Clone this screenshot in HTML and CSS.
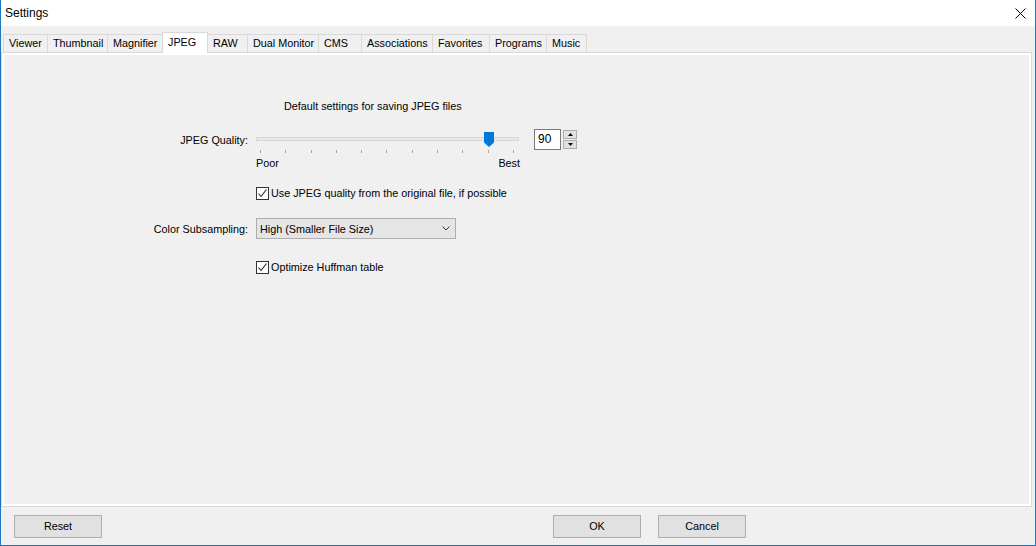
FILE: index.html
```html
<!DOCTYPE html>
<html>
<head>
<meta charset="utf-8">
<link rel="stylesheet" href="styles.css">
</head>
<body>
<div class="window">
  <div class="titlebar">
    <span class="title">Settings</span>
    <svg class="close" width="11" height="11" viewBox="0 0 11 11"><path d="M0.5 0.5L10.5 10.5M10.5 0.5L0.5 10.5" stroke="#000" stroke-width="1"/></svg>
  </div>
  <div class="tabs">
    <div class="tab t-viewer">Viewer</div>
    <div class="tab t-thumb">Thumbnail</div>
    <div class="tab t-mag">Magnifier</div>
    <div class="tab active t-jpeg">JPEG</div>
    <div class="tab t-raw">RAW</div>
    <div class="tab t-dual">Dual Monitor</div>
    <div class="tab t-cms">CMS</div>
    <div class="tab t-assoc">Associations</div>
    <div class="tab t-fav">Favorites</div>
    <div class="tab t-prog">Programs</div>
    <div class="tab last t-music">Music</div>
  </div>
  <div class="panel">
    <div class="heading">Default settings for saving JPEG files</div>
    <div class="row quality-row">
      <div class="lbl">JPEG Quality:</div>
      <div class="slider">
        <div class="track"></div>
        <svg class="thumb" width="10" height="15" viewBox="0 0 10 15"><path d="M0 0H10V10.5L5 15L0 10.5Z" fill="#0078d7"/></svg>
      </div>
      <div class="spin-box">90</div>
      <div class="spin-btns">
        <div class="spin-btn"><svg width="7" height="4" viewBox="0 0 7 4"><path d="M0 4L3.5 0L7 4Z" fill="#000"/></svg></div>
        <div class="spin-btn"><svg width="7" height="4" viewBox="0 0 7 4"><path d="M0 0L3.5 4L7 0Z" fill="#000"/></svg></div>
      </div>
    </div>
    <div class="ticks">
      <span class="tick"></span><span class="tick"></span><span class="tick"></span><span class="tick"></span><span class="tick"></span><span class="tick"></span><span class="tick"></span><span class="tick"></span><span class="tick"></span><span class="tick"></span><span class="tick"></span>
    </div>
    <div class="scale-labels"><span>Poor</span><span>Best</span></div>
    <div class="check-row first-check">
      <span class="checkbox"><svg width="11" height="11" viewBox="0 0 11 11"><path d="M1.5 5.5L4 8.5L9.5 1.5" fill="none" stroke="#222" stroke-width="1.1"/></svg></span>
      <span class="check-text">Use JPEG quality from the original file, if possible</span>
    </div>
    <div class="row combo-row">
      <div class="lbl">Color Subsampling:</div>
      <div class="combo">
        <span>High (Smaller File Size)</span>
        <svg class="chev" width="8" height="5" viewBox="0 0 8 5"><path d="M0.5 0.5L4 4L7.5 0.5" fill="none" stroke="#333" stroke-width="1"/></svg>
      </div>
    </div>
    <div class="check-row second-check">
      <span class="checkbox"><svg width="11" height="11" viewBox="0 0 11 11"><path d="M1.5 5.5L4 8.5L9.5 1.5" fill="none" stroke="#222" stroke-width="1.1"/></svg></span>
      <span class="check-text">Optimize Huffman table</span>
    </div>
  </div>
  <div class="footer">
    <div class="btn reset">Reset</div>
    <div class="btn ok">OK</div>
    <div class="btn cancel">Cancel</div>
  </div>
</div>
</body>
</html>
```

FILE: styles.css
```css
body {
  margin: 0;
  font-family: "Liberation Sans", Arial, sans-serif;
  font-size: 10.8px;
  color: #000;
}

.window {
  box-sizing: border-box;
  width: 1036px;
  height: 546px;
  border: 1px solid #1f77c4;
  border-top: none;
  background: #f0f0f0;
  display: flex;
  flex-direction: column;
}

.titlebar {
  height: 26px;
  flex: none;
  background: #fff;
  display: flex;
  align-items: center;
  justify-content: space-between;
  padding-left: 4px;
  font-size: 12px;
}

.close {
  margin-right: 9px;
}

.tabs {
  height: 26px;
  flex: none;
  display: flex;
  align-items: flex-end;
  padding-left: 2px;
}

.tab {
  box-sizing: border-box;
  height: 18px;
  border: 1px solid #d9d9d9;
  border-bottom: none;
  border-right: none;
  padding-left: 5px;
  line-height: 17px;
  white-space: nowrap;
  background: #f0f0f0;
}

.tab.active {
  height: 21px;
  margin-bottom: -1px;
  background: #fff;
  border-right: 1px solid #d9d9d9;
  position: relative;
  z-index: 2;
  line-height: 18px;
}

.tab.active + .tab {
  border-left: none;
}

.tab.last {
  border-right: 1px solid #d9d9d9;
}

.t-viewer { width: 44px; }
.t-thumb { width: 60px; }
.t-mag { width: 55px; }
.t-jpeg { width: 46px; }
.t-raw { width: 39px; }
.t-dual { width: 71px; }
.t-cms { width: 43px; }
.t-assoc { width: 71px; }
.t-fav { width: 57px; }
.t-prog { width: 57px; }
.t-music { width: 41px; }

.panel {
  flex: 1;
  margin-right: 3px;
  border: 1px solid #d9d9d9;
  box-shadow: inset 0 0 0 2px #fff;
  background: #f0f0f0;
}

.heading {
  margin-top: 46px;
  margin-left: 282px;
  line-height: 15px;
}

.row {
  display: flex;
  align-items: center;
}

.lbl {
  width: 246px;
  margin-right: 8px;
  text-align: right;
  white-space: nowrap;
}

.quality-row {
  margin-top: 15px;
  height: 21px;
}

.slider {
  position: relative;
  width: 263px;
  height: 21px;
}

.track {
  box-sizing: border-box;
  margin-top: 8px;
  height: 4px;
  border: 1px solid #d6d6d6;
  background: #e7eaea;
}

.thumb {
  position: absolute;
  left: 228px;
  top: 3px;
}

.spin-box {
  box-sizing: border-box;
  margin-left: 15px;
  width: 27px;
  height: 21px;
  border: 1px solid #7a7a7a;
  background: #fff;
  padding-left: 3px;
  line-height: 19px;
  font-size: 12px;
}

.spin-btns {
  margin-left: 2px;
  display: flex;
  flex-direction: column;
  gap: 1px;
}

.spin-btn {
  box-sizing: border-box;
  width: 14px;
  height: 9px;
  border: 1px solid #adadad;
  background: #e1e1e1;
  display: flex;
  align-items: center;
  justify-content: center;
}

.spin-btn svg {
  width: 5px;
  height: 3px;
}

.ticks {
  margin-left: 258px;
  width: 254px;
  height: 3px;
  display: flex;
  justify-content: space-between;
}

.tick {
  width: 1px;
  height: 3px;
  background: #a6a6a6;
}

.scale-labels {
  margin-top: 3px;
  margin-left: 254px;
  width: 264px;
  display: flex;
  justify-content: space-between;
  line-height: 15px;
}

.check-row {
  display: flex;
  align-items: center;
  margin-left: 254px;
  height: 13px;
}

.first-check {
  margin-top: 16px;
}

.second-check {
  margin-top: 22px;
}

.checkbox {
  box-sizing: border-box;
  width: 13px;
  height: 13px;
  border: 1px solid #333;
  background: #fff;
  display: flex;
}

.check-text {
  margin-left: 2px;
  line-height: 13px;
}

.combo-row {
  margin-top: 18px;
}

.combo {
  box-sizing: border-box;
  width: 200px;
  height: 21px;
  border: 1px solid #adadad;
  background: #e5e5e5;
  display: flex;
  align-items: center;
  justify-content: space-between;
  padding-left: 3px;
  padding-right: 5px;
}

.footer {
  height: 38px;
  flex: none;
  display: flex;
  align-items: flex-start;
  padding-top: 8px;
  box-sizing: border-box;
}

.btn {
  box-sizing: border-box;
  width: 88px;
  height: 23px;
  border: 1px solid #adadad;
  background: #e1e1e1;
  text-align: center;
  line-height: 21px;
}

.reset {
  margin-left: 13px;
}

.ok {
  margin-left: 451px;
}

.cancel {
  margin-left: 17px;
}
```
